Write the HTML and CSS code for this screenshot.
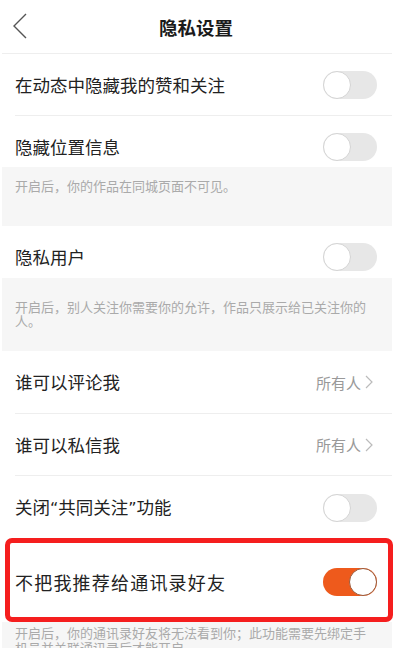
FILE: index.html
```html
<!DOCTYPE html>
<html lang="zh-CN">
<head>
<meta charset="utf-8">
<title>隐私设置</title>
<link rel="stylesheet" href="styles.css">
</head>
<body>
<div class="page">
  <div class="header">
    <svg class="back" width="16" height="28" viewBox="0 0 16 28"><polyline points="13,2 1,14 13,26" fill="none" stroke="#555" stroke-width="1.4"/></svg>
    <div class="title">隐私设置</div>
  </div>

  <div class="row r1 line"><span class="label">在动态中隐藏我的赞和关注</span><span class="toggle"></span></div>
  <div class="row r2"><span class="label">隐藏位置信息</span><span class="toggle"></span></div>
  <div class="hint h1">开启后，你的作品在同城页面不可见。</div>
  <div class="row r3"><span class="label">隐私用户</span><span class="toggle"></span></div>
  <div class="hint h2">开启后，别人关注你需要你的允许，作品只展示给已关注你的人。</div>
  <div class="row r4 line"><span class="label">谁可以评论我</span><span class="value">所有人<svg class="arrow" width="8" height="14" viewBox="0 0 8 14"><polyline points="1,1 7,7 1,13" fill="none" stroke="#bbb" stroke-width="1.2"/></svg></span></div>
  <div class="row r5 line"><span class="label">谁可以私信我</span><span class="value">所有人<svg class="arrow" width="8" height="14" viewBox="0 0 8 14"><polyline points="1,1 7,7 1,13" fill="none" stroke="#bbb" stroke-width="1.2"/></svg></span></div>
  <div class="row r6"><span class="label">关闭<span class="q">“</span>共同关注<span class="q">”</span>功能</span><span class="toggle"></span></div>
  <div class="row r7 marked"><span class="label big">不把我推荐给通讯录好友</span><span class="toggle on"></span></div>
  <div class="hint h3">开启后，你的通讯录好友将无法看到你；此功能需要先绑定手机号并关联通讯录后才能开启。</div>
</div>
</body>
</html>
```

FILE: styles.css
```css
html, body {
  margin: 0;
  padding: 0;
  background: #fff;
  overflow: hidden;
}
body {
  width: 400px;
  height: 648px;
  font-family: "Noto Sans CJK SC", "Noto Sans", sans-serif;
  color: #222;
}
.page {
  width: 390px;
  margin-left: 2px;
}
.header {
  height: 53px;
  border-bottom: 1px solid #eeeeee;
  display: flex;
  align-items: center;
  justify-content: center;
  position: relative;
}
.back {
  position: absolute;
  left: 11px;
  top: 12px;
}
.title {
  font-size: 18.5px;
  font-weight: bold;
  color: #1a1a1a;
  margin-left: -2px;
}
.row {
  box-sizing: border-box;
  display: flex;
  align-items: center;
  justify-content: space-between;
  margin-left: 13px;
  padding-right: 15px;
}
.line {
  border-bottom: 1px solid #eeeeee;
}
.label {
  font-size: 17.5px;
  line-height: 24px;
  color: #222;
}
.label .q {
  font-family: "DejaVu Sans", "Noto Sans", sans-serif;
  font-size: 16px;
}
.label.big {
  font-size: 18px;
  letter-spacing: 1.2px;
}
.r1 { height: 62px; }
.r2 { height: 51px; padding-top: 10px; }
.r3 { height: 52px; padding-top: 10px; }
.r4 { height: 63px; }
.r5 { height: 62px; }
.r6 { height: 62px; padding-top: 2px; }
.r7 { height: 84px; padding-top: 4px; }
.hint {
  box-sizing: border-box;
  background: #f6f6f6;
  color: #aaaaaa;
  font-size: 13px;
  padding-left: 13px;
  padding-right: 15px;
}
.h1 { height: 59px; padding-top: 10px; line-height: 17px; }
.h2 { height: 73px; padding-top: 22px; line-height: 14px; }
.h3 { height: 30px; padding-top: 3px; line-height: 15px; }
.value {
  display: flex;
  align-items: center;
  font-size: 15px;
  color: #999;
  padding-right: 4px;
}
.arrow {
  margin-left: 4px;
}
.toggle {
  position: relative;
  width: 54px;
  height: 28px;
  border-radius: 14px;
  background: #e7e7e7;
  flex: none;
}
.toggle::after {
  content: "";
  position: absolute;
  left: 0;
  top: 0;
  box-sizing: border-box;
  width: 28px;
  height: 28px;
  border-radius: 50%;
  background: #fff;
  border: 1px solid #d4d4d4;
}
.toggle.on {
  background: #ee5a1c;
}
.toggle.on::after {
  left: auto;
  right: 0;
  border: 1.5px solid #9a5a3a;
}
.marked {
  position: relative;
}
.marked::before {
  content: "";
  position: absolute;
  left: -10px;
  right: -1px;
  top: 0;
  bottom: 0;
  border: 5px solid #f51e1e;
  border-radius: 7px;
  pointer-events: none;
}
```
